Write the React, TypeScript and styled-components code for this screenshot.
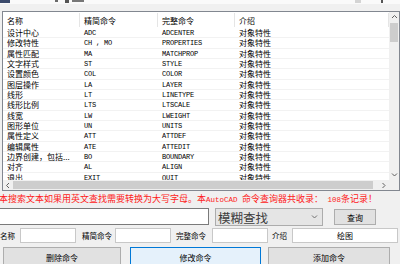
import React from 'react';
import styled, { createGlobalStyle } from 'styled-components';

const Global = createGlobalStyle`
  html, body { margin: 0; padding: 0; }
  body {
    background: #f0f0f0;
    width: 400px;
    height: 264px;
    overflow: hidden;
    font-family: "Noto Sans CJK SC", sans-serif;
  }
`;

const Window = styled.div`
  width: 400px;
  height: 264px;
  overflow: hidden;
  display: flex;
  flex-direction: column;
  background: #f0f0f0;
`;

const TopStrip = styled.div`
  height: 11px;
  flex: none;
  display: flex;
  align-items: flex-start;
  background: linear-gradient(#fafafa 0 4px, #f0f0f0 4px);
`;

const Bit = styled.div<{ $w: number; $h: number; $ml: number; $c: string }>`
  flex: none;
  width: ${(p) => p.$w}px;
  height: ${(p) => p.$h}px;
  margin-left: ${(p) => p.$ml}px;
  background: ${(p) => p.$c};
`;

const ListFrame = styled.div`
  flex: none;
  box-sizing: border-box;
  margin-left: 2px;
  width: 398px;
  height: 180px;
  border: 1px solid #828790;
  background: #fff;
  display: grid;
  grid-template-columns: 1fr 10px;
  grid-template-rows: 1fr 10px;
`;

const Viewport = styled.div`
  overflow: hidden;
  display: flex;
  flex-direction: column;
`;

const cols = '77px 78px 77px 1fr';

const HeaderRow = styled.div`
  flex: none;
  height: 16px;
  display: grid;
  grid-template-columns: ${cols};
  background: #fff;
`;

const HeaderCell = styled.div`
  display: flex;
  align-items: center;
  padding-left: 4px;
  font-size: 8px;
  color: #000;
  border-right: 1px solid #e5e5e5;
  margin: 1px 0;
  white-space: nowrap;
  overflow: hidden;
`;

const Row = styled.div`
  flex: none;
  height: 10.35px;
  display: grid;
  grid-template-columns: ${cols};
  box-shadow: inset 0 -1px 0 #f2f2f2;
`;

const Cell = styled.div<{ $mono?: boolean }>`
  padding-left: 4px;
  white-space: nowrap;
  overflow: hidden;
  line-height: 10.35px;
  color: #000;
  font-size: ${(p) => (p.$mono ? '7px' : '8px')};
  font-family: ${(p) =>
    p.$mono
      ? '"Liberation Mono", "Noto Sans CJK SC", monospace'
      : '"Noto Sans CJK SC", sans-serif'};
  letter-spacing: ${(p) => (p.$mono ? '-0.2px' : '0')};
`;

const VScroll = styled.div`
  display: flex;
  flex-direction: column;
  background: #f0f0f0;
`;

const HScroll = styled.div`
  display: flex;
  background: #f0f0f0;
`;

const Arrow = styled.div`
  flex: none;
  width: 10px;
  height: 10px;
  display: flex;
  align-items: center;
  justify-content: center;
`;

const VTrack = styled.div`
  flex: 1;
  display: flex;
  flex-direction: column;
  align-items: center;
`;

const VThumb = styled.div`
  margin-top: 1px;
  width: 8px;
  height: 19px;
  background: #cdcdcd;
`;

const HTrack = styled.div`
  flex: 1;
  display: flex;
  align-items: center;
`;

const HThumb = styled.div`
  width: 360px;
  height: 8px;
  background: #cdcdcd;
`;

const Corner = styled.div`
  background: #f0f0f0;
`;

const Notice = styled.div`
  flex: none;
  height: 16px;
  line-height: 16px;
  white-space: nowrap;
  overflow: hidden;
  color: #ff1a1a;
  font-size: 9px;
  margin-left: -1px;
`;

const Latin = styled.span`
  font-family: "Liberation Mono", monospace;
  font-size: 7.5px;
`;

const SearchRow = styled.div`
  flex: none;
  height: 19px;
  display: flex;
  align-items: flex-start;
`;

const TextBox = styled.div<{ $w: number }>`
  flex: none;
  box-sizing: border-box;
  width: ${(p) => p.$w}px;
  background: #fff;
  border: 1px solid #7a7a7a;
  display: flex;
  align-items: center;
  justify-content: center;
  font-size: 8px;
  color: #000;
`;

const SearchBox = styled(TextBox)`
  margin-left: -2px;
  margin-top: 1px;
  height: 17px;
`;

const Combo = styled.div`
  flex: none;
  box-sizing: border-box;
  margin-left: 6px;
  margin-top: 1px;
  width: 108px;
  height: 18px;
  background: #e5e5e5;
  border: 1px solid #acacac;
  display: flex;
  align-items: center;
  justify-content: space-between;
  padding: 0 4px 0 2px;
  font-size: 12.5px;
  color: #3c3c3c;
`;

const Button = styled.div<{ $w: number; $focus?: boolean }>`
  flex: none;
  box-sizing: border-box;
  width: ${(p) => p.$w}px;
  background: ${(p) => (p.$focus ? '#e5f1fb' : '#e1e1e1')};
  border: 1px solid ${(p) => (p.$focus ? '#0078d7' : '#adadad')};
  display: flex;
  align-items: center;
  justify-content: center;
  font-size: 8px;
  color: #000;
`;

const QueryButton = styled(Button)`
  margin-left: 11px;
  margin-top: 2px;
  height: 16px;
`;

const FieldRow = styled.div`
  flex: none;
  height: 20px;
  display: grid;
  grid-template-columns: 20px 56px 39px 56px 41px 56px 24px 106px;
  align-items: start;
`;

const Label = styled.div<{ $pl: number }>`
  padding-left: ${(p) => p.$pl}px;
  margin-top: 2px;
  height: 15px;
  line-height: 15px;
  font-size: 7.5px;
  color: #000;
  white-space: nowrap;
  overflow: hidden;
`;

const Field = styled(TextBox)`
  margin-top: 2px;
  height: 15px;
  border-color: #c8c8c8;
`;

const ButtonRow = styled.div`
  flex: none;
  display: flex;
  align-items: flex-start;
  padding-top: 1px;
`;

const ActionButton = styled(Button)<{ $ml: number }>`
  margin-left: ${(p) => p.$ml}px;
  height: 22px;
  padding-bottom: 2px;
`;

const Chevron = ({ dir, color = '#606060' }: { dir: 'up' | 'down' | 'left' | 'right'; color?: string }) => {
  const pts: Record<string, string> = {
    up: '1,4 3.5,1.5 6,4',
    down: '1,1.5 3.5,4 6,1.5',
    left: '4,1 1.5,3.5 4,6',
    right: '1.5,1 4,3.5 1.5,6',
  };
  const vertical = dir === 'up' || dir === 'down';
  return (
    <svg width={vertical ? 7 : 6} height={vertical ? 6 : 7} viewBox={vertical ? '0 0 7 6' : '0 0 6 7'}>
      <polyline points={pts[dir]} fill="none" stroke={color} strokeWidth="1" />
    </svg>
  );
};

const rows: [string, string, string][] = [
  ['设计中心', 'ADC', 'ADCENTER'],
  ['修改特性', 'CH , MO', 'PROPERTIES'],
  ['属性匹配', 'MA', 'MATCHPROP'],
  ['文字样式', 'ST', 'STYLE'],
  ['设置颜色', 'COL', 'COLOR'],
  ['图层操作', 'LA', 'LAYER'],
  ['线形', 'LT', 'LINETYPE'],
  ['线形比例', 'LTS', 'LTSCALE'],
  ['线宽', 'LW', 'LWEIGHT'],
  ['图形单位', 'UN', 'UNITS'],
  ['属性定义', 'ATT', 'ATTDEF'],
  ['编辑属性', 'ATE', 'ATTEDIT'],
  ['边界创建，包括...', 'BO', 'BOUNDARY'],
  ['对齐', 'AL', 'ALIGN'],
  ['退出', 'EXIT', 'QUIT'],
];

export default function App() {
  return (
    <>
      <Global />
      <Window>
        <TopStrip>
          <Bit $w={10} $h={3} $ml={0} $c="#3b4a6b" />
          <Bit $w={3} $h={2} $ml={45} $c="#6a6a6a" />
          <Bit $w={4} $h={3} $ml={7} $c="#555" />
          <Bit $w={12} $h={2} $ml={3} $c="#777" />
          <Bit $w={6} $h={3} $ml={271} $c="#d4d4d4" />
          <Bit $w={2} $h={3} $ml={20} $c="#555" />
        </TopStrip>
        <ListFrame>
          <Viewport>
            <HeaderRow>
              <HeaderCell>名称</HeaderCell>
              <HeaderCell>精简命令</HeaderCell>
              <HeaderCell>完整命令</HeaderCell>
              <HeaderCell>介绍</HeaderCell>
            </HeaderRow>
            {rows.map(([name, short, full]) => (
              <Row key={name}>
                <Cell>{name}</Cell>
                <Cell $mono>{short}</Cell>
                <Cell $mono>{full}</Cell>
                <Cell>对象特性</Cell>
              </Row>
            ))}
          </Viewport>
          <VScroll>
            <Arrow>
              <Chevron dir="up" />
            </Arrow>
            <VTrack>
              <VThumb />
            </VTrack>
            <Arrow>
              <Chevron dir="down" />
            </Arrow>
          </VScroll>
          <HScroll>
            <Arrow>
              <Chevron dir="left" />
            </Arrow>
            <HTrack>
              <HThumb />
            </HTrack>
            <Arrow>
              <Chevron dir="right" />
            </Arrow>
          </HScroll>
          <Corner />
        </ListFrame>
        <Notice>
          本搜索文本如果用英文查找需要转换为大写字母。本<Latin>AutoCAD </Latin>命令查询器共收录：<Latin> 108</Latin>条记录！
        </Notice>
        <SearchRow>
          <SearchBox $w={211} />
          <Combo>
            <span>模糊查找</span>
            <Chevron dir="down" color="#707070" />
          </Combo>
          <QueryButton $w={42}>查询</QueryButton>
        </SearchRow>
        <FieldRow>
          <Label $pl={0}>名称</Label>
          <Field $w={56} />
          <Label $pl={6}>精简命令</Label>
          <Field $w={56} />
          <Label $pl={5}>完整命令</Label>
          <Field $w={56} />
          <Label $pl={4}>介绍</Label>
          <Field $w={106}>绘图</Field>
        </FieldRow>
        <ButtonRow>
          <ActionButton $w={118} $ml={3}>删除命令</ActionButton>
          <ActionButton $w={131} $ml={9} $focus>修改命令</ActionButton>
          <ActionButton $w={122} $ml={7}>添加命令</ActionButton>
        </ButtonRow>
      </Window>
    </>
  );
}
